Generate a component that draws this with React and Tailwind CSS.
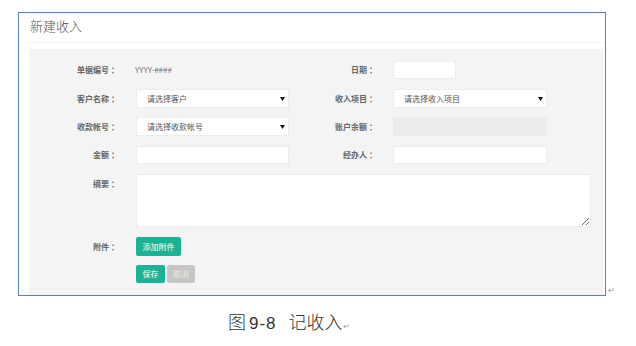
import React from "react";

const cjk = { fontFamily: '"Noto Sans CJK SC", "Noto Sans", sans-serif' };

function Arrow() {
  return (
    <svg width="5" height="4" viewBox="0 0 5 4" className="absolute right-[3px] top-1/2 -translate-y-1/2">
      <path d="M0 0 H5 L2.5 4 Z" fill="#111" />
    </svg>
  );
}

function Select({ text, w = "w-[153px]" }) {
  return (
    <div className={`relative ${w} h-full bg-white border border-[#ececec] flex items-center pl-[10px] text-[8px] text-[#555]`}>
      {text}
      <Arrow />
    </div>
  );
}

function Input({ w = "w-[153px]", disabled }) {
  return <div className={`${w} h-full border border-[#ececec] ${disabled ? "bg-[#ececec]" : "bg-white"}`} />;
}

function Label({ children, w = "w-[90px]", top }) {
  return (
    <div className={`${w} shrink-0 flex justify-end text-[8px] font-bold text-[#666] ${top ? "self-start pt-[4px]" : ""}`}>
      <span>{children}</span>
      <span className="ml-[2px]">：</span>
    </div>
  );
}

function Return() {
  return <span className="text-[8px] leading-none text-[#999]">↵</span>;
}

export default function App() {
  return (
    <div style={cjk} className="w-[636px] h-[346px] bg-white overflow-hidden">
      <div className="pt-[12px] pl-[18px] flex items-end">
        <div className="w-[588px] h-[284px] border border-[#5581bd] flex flex-col">
          <div className="h-[29px] pl-[11px] pt-[3px] flex items-start text-[13px] font-light text-[#555]">新建收入</div>
          <div className="ml-[10px] mr-[2px] h-px bg-[#f0f0f0]" />
          <div className="h-[6px]" />
          <div className="ml-[10px] mr-[2px] flex-1 bg-[#f4f4f4] pt-[12px] flex flex-col">
            <div className="flex items-center h-[18px]">
              <Label>单据编号</Label>
              <div className="ml-[16px] w-[154px] text-[8px] text-[#777]">YYYY-####</div>
              <Label w="w-[88px]">日期</Label>
              <div className="ml-[16px] h-full"><Input w="w-[63px]" /></div>
            </div>
            <div className="flex items-center h-[19px] mt-[10px]">
              <Label>客户名称</Label>
              <div className="ml-[17px] h-full"><Select text="请选择客户" /></div>
              <Label w="w-[88px]">收入项目</Label>
              <div className="ml-[16px] h-full"><Select text="请选择收入项目" w="w-[154px]" /></div>
            </div>
            <div className="flex items-center h-[19px] mt-[9px]">
              <Label>收款帐号</Label>
              <div className="ml-[17px] h-full"><Select text="请选择收款帐号" /></div>
              <Label w="w-[88px]">账户余额</Label>
              <div className="ml-[16px] h-full"><Input w="w-[154px]" disabled /></div>
            </div>
            <div className="flex items-center h-[18px] mt-[10px]">
              <Label>金额</Label>
              <div className="ml-[17px] h-full"><Input /></div>
              <Label w="w-[88px]">经办人</Label>
              <div className="ml-[16px] h-full"><Input w="w-[154px]" /></div>
            </div>
            <div className="flex items-center h-[53px] mt-[10px]">
              <Label top>摘要</Label>
              <textarea
                readOnly
                className="ml-[17px] w-[455px] h-full bg-white border border-[#ececec] outline-none"
              />
            </div>
            <div className="flex items-center h-[19px] mt-[10px]">
              <Label>附件</Label>
              <button className="ml-[17px] h-full w-[45px] rounded-[2px] bg-[#1bb394] text-white text-[8px]">添加附件</button>
            </div>
            <div className="flex items-center h-[18px] mt-[9px]">
              <div className="w-[90px]" />
              <button className="ml-[17px] h-full w-[29px] rounded-[2px] bg-[#1bb394] text-white text-[8px]">保存</button>
              <button className="ml-[2px] h-full w-[28px] rounded-[2px] bg-[#c6c6c6] text-[#e8e8e8] text-[8px]">取消</button>
            </div>
          </div>
        </div>
        <div className="ml-[2px] mb-[-2px]"><Return /></div>
      </div>
      <div className="mt-[14px] pl-[228px] flex items-baseline text-[18px] leading-[22px] font-light text-[#333]">
        <span>图</span>
        <span className="ml-[3px] tracking-[1px]" style={{ fontFamily: '"Liberation Sans", sans-serif', fontSize: 17 }}>9-8</span>
        <span className="ml-[12px]">记收入</span>
        <Return />
      </div>
    </div>
  );
}
